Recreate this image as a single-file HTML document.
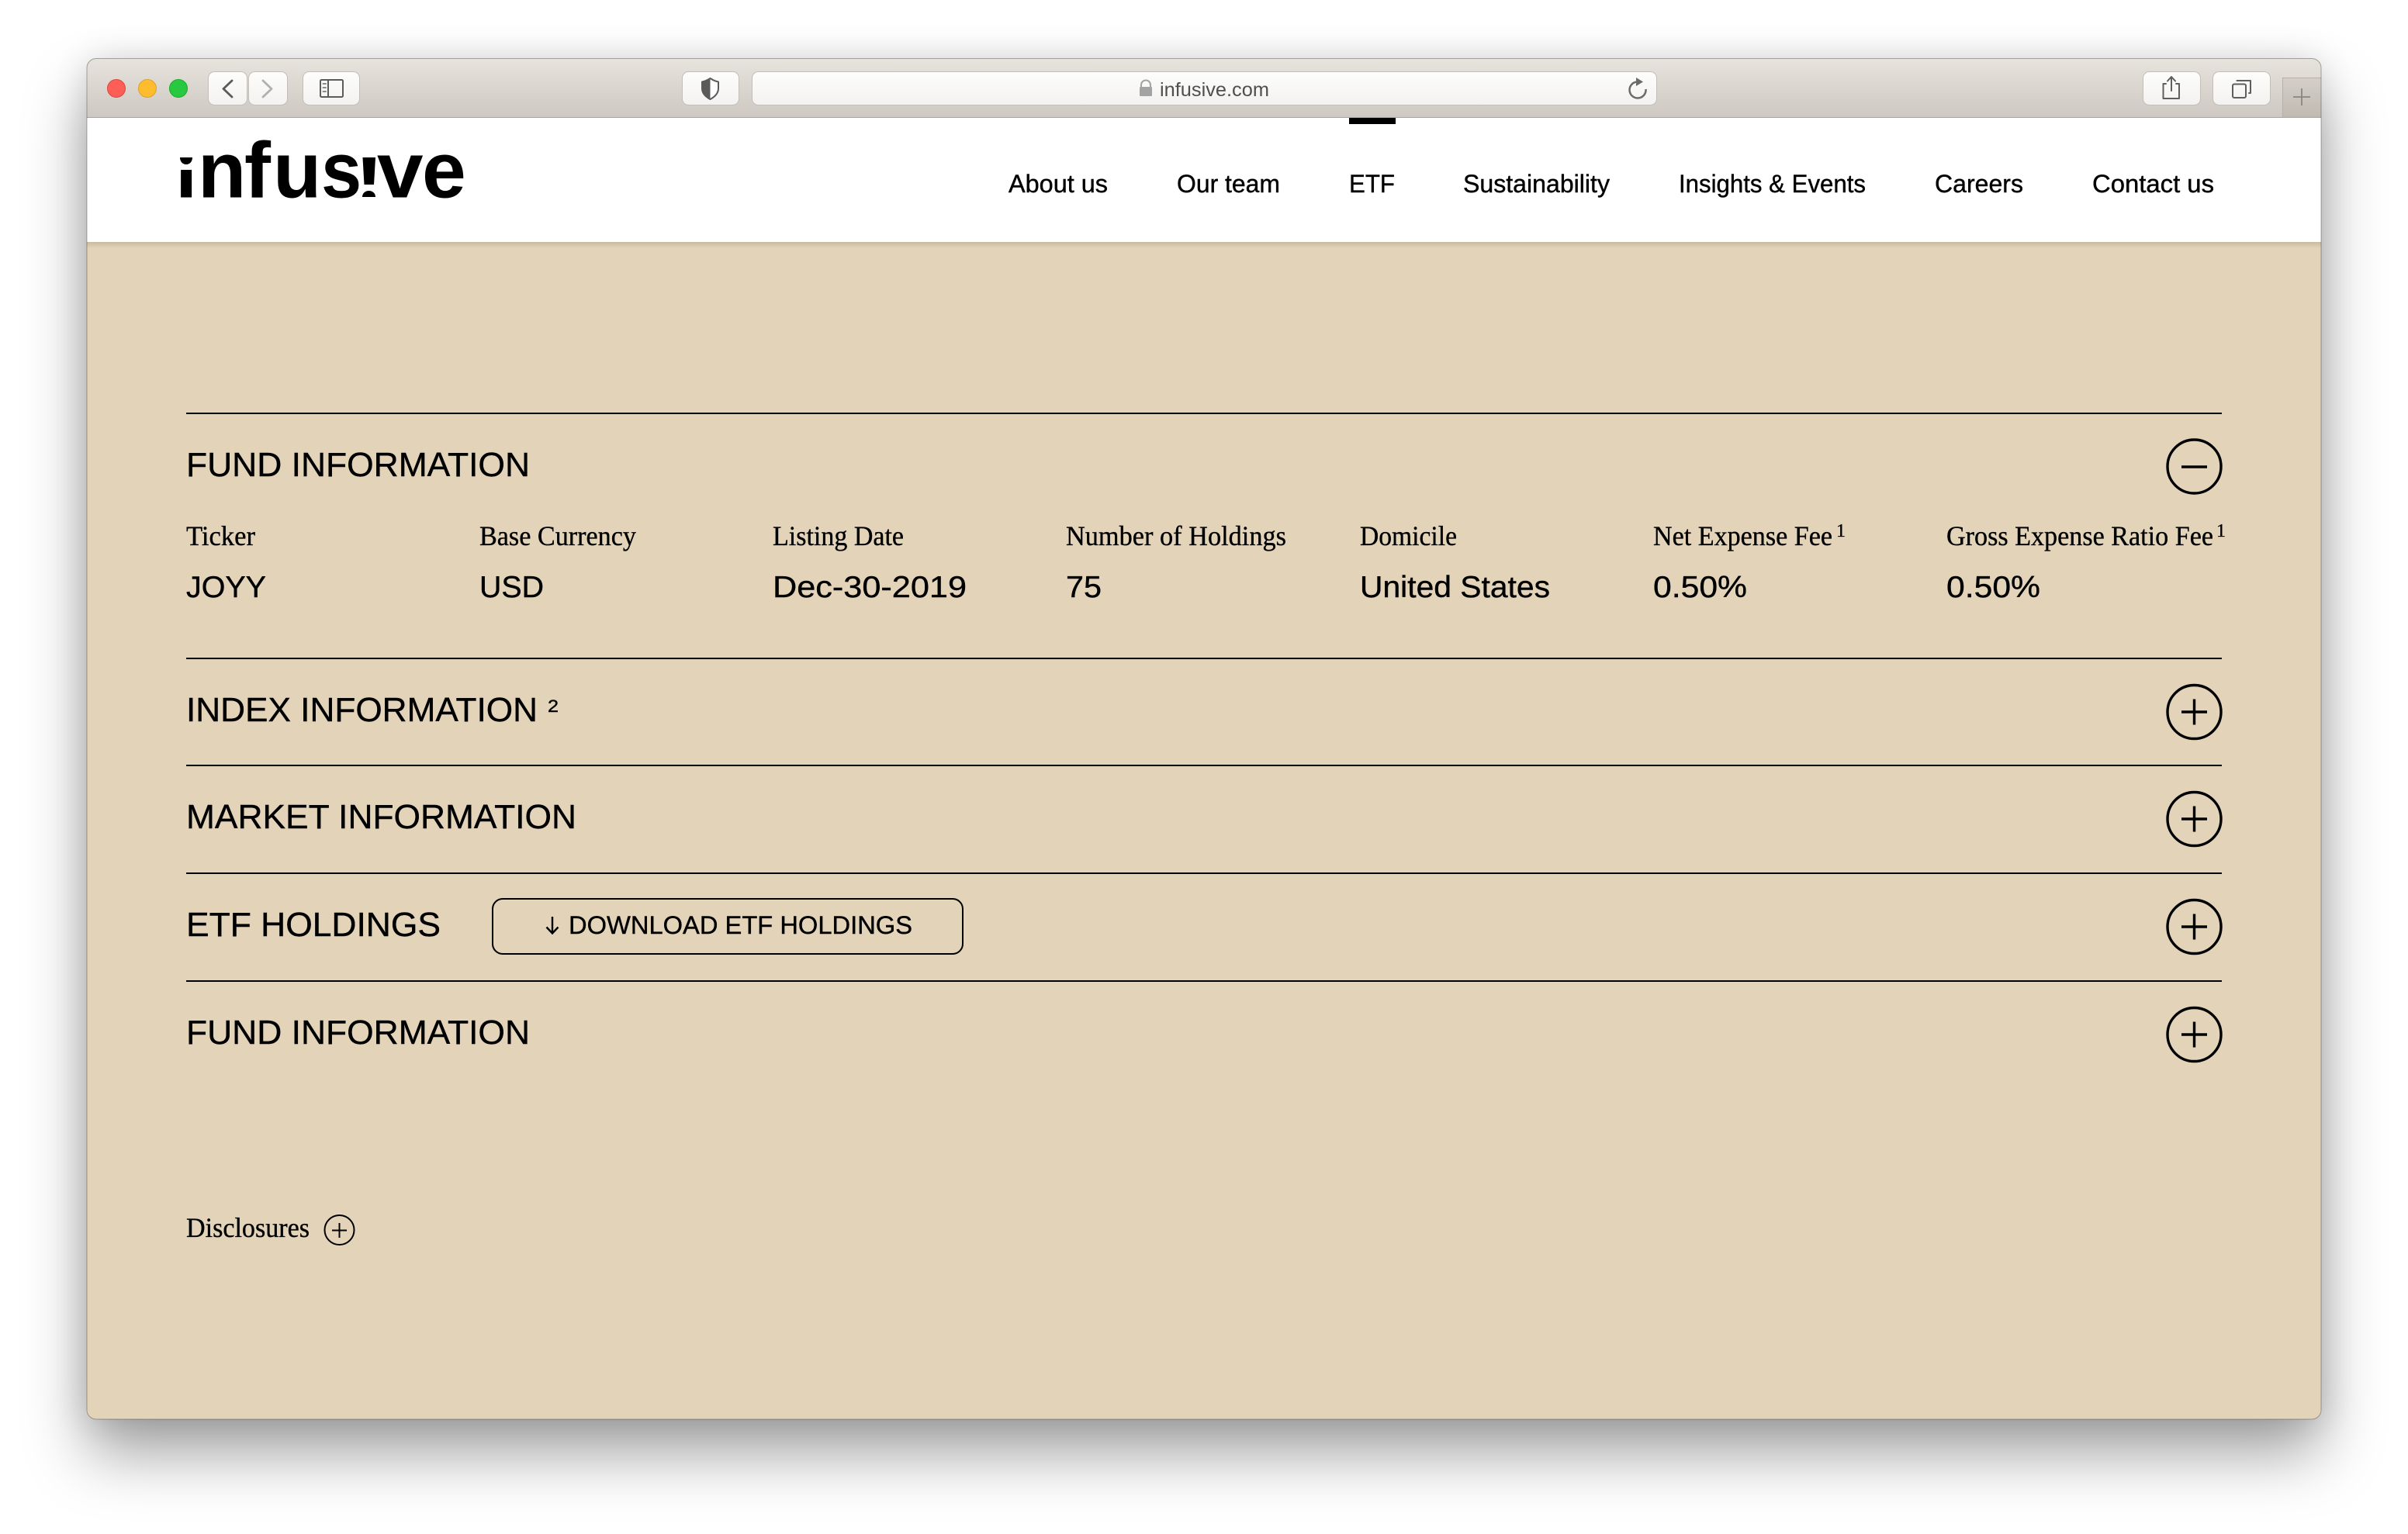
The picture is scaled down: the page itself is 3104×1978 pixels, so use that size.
<!DOCTYPE html>
<html><head><meta charset="utf-8"><title>infusive.com</title>
<style>
html,body{margin:0;padding:0;width:3104px;height:1978px;background:#fff;overflow:hidden}
#w{position:absolute;left:112px;top:75px;width:2880px;height:1755px;border-radius:12px;box-shadow:0 44px 80px rgba(0,0,0,.37),0 0 44px rgba(0,0,0,.12)}
svg{position:absolute;left:0;top:0;display:block}
.s{font-family:"Liberation Sans",sans-serif;fill:#000;stroke:#000;stroke-width:.4px}
.r{font-family:"Liberation Serif",serif;fill:#000;stroke:#000;stroke-width:.35px}
.b{font-family:"Liberation Sans",sans-serif;font-weight:700;font-size:102px;fill:#000}
.t{font-size:44px}.n{font-size:32px}.v{font-size:39px}.l{font-size:36px}
</style></head><body>
<div id="w"></div>
<svg width="3104" height="1978" viewBox="0 0 3104 1978" xmlns="http://www.w3.org/2000/svg">
<defs>
<linearGradient id="tb" x1="0" y1="0" x2="0" y2="1"><stop offset="0" stop-color="#e7e3dd"/><stop offset="1" stop-color="#cdc8c1"/></linearGradient>
<linearGradient id="nt" x1="0" y1="0" x2="0" y2="1"><stop offset="0" stop-color="#d4cfc8"/><stop offset="1" stop-color="#bfbab2"/></linearGradient>
<linearGradient id="bt" x1="0" y1="0" x2="0" y2="1"><stop offset="0" stop-color="#fdfdfc"/><stop offset="1" stop-color="#f3f2f0"/></linearGradient>
<linearGradient id="sh" x1="0" y1="0" x2="0" y2="1"><stop offset="0" stop-color="#000" stop-opacity=".12"/><stop offset="1" stop-color="#000" stop-opacity="0"/></linearGradient>
<clipPath id="win"><rect x="112" y="75" width="2880" height="1755" rx="12"/></clipPath>
<clipPath id="ci"><rect x="225" y="219" width="30" height="40"/></clipPath>
<clipPath id="ce"><rect x="462" y="203" width="28" height="34"/></clipPath>
</defs>
<g clip-path="url(#win)">
<rect x="112" y="75" width="2880" height="1755" fill="#e3d3b8"/>
<rect x="112" y="75" width="2880" height="77" fill="url(#tb)"/>
<rect x="112" y="151" width="2880" height="1" fill="#aaa59e"/>
<rect x="112" y="152" width="2880" height="160" fill="#fff"/>
<rect x="112" y="312" width="2880" height="8" fill="url(#sh)"/>
<rect x="2942.500" y="100.500" width="60" height="50.500" fill="url(#nt)" stroke="#b5b0a8"/>
</g>
<rect x="112" y="75.500" width="2880" height="1754.500" rx="12" fill="none" stroke="#000" stroke-opacity=".3" stroke-width="1"/>
<circle cx="150" cy="114" r="11.500" fill="#fd5f57" stroke="#e0443e"/>
<circle cx="190" cy="114" r="11.500" fill="#febc2e" stroke="#dea123"/>
<circle cx="230" cy="114" r="11.500" fill="#28c940" stroke="#1aab29"/>
<g fill="url(#bt)" stroke="#c3bfb8">
<rect x="268.500" y="92.500" width="50" height="43" rx="8"/>
<rect x="320.500" y="92.500" width="50" height="43" rx="8"/>
<rect x="390.500" y="92.500" width="73" height="43" rx="8"/>
<rect x="879.500" y="92.500" width="73" height="43" rx="8"/>
<rect x="969.500" y="92.500" width="1166" height="43" rx="8"/>
<rect x="2762.500" y="92.500" width="74" height="43" rx="8"/>
<rect x="2852.500" y="92.500" width="74" height="43" rx="8"/>
</g>
<g fill="none" stroke-linecap="round" stroke-linejoin="round">
<path d="M299 104 L288 114.500 L299 125" stroke="#5a5a5a" stroke-width="2.800"/>
<path d="M339 104 L350 114.500 L339 125" stroke="#b0b0b0" stroke-width="2.800"/>
<rect x="413" y="103" width="29" height="22" rx="1.500" stroke="#5c5c5c" stroke-width="2"/>
<path d="M423 103 V125" stroke="#5c5c5c" stroke-width="2"/>
<path d="M416.500 108 H420 M416.500 113 H420 M416.500 118 H420" stroke="#8a8a8a" stroke-width="2"/>
<path d="M915.500 101 C911 104 908 105 905 105.500 V114 C905 121 910 125 915.500 128 C921 125 926 121 926 114 V105.500 C923 105 920 104 915.500 101 Z" stroke="#5a5a5a" stroke-width="2" fill="#fff"/>
<path d="M915.500 101 C911 104 908 105 905 105.500 V114 C905 121 910 125 915.500 128 Z" fill="#5a5a5a"/>
<path d="M2110 105.500 A10.500 10.500 0 1 0 2121.500 115" stroke="#6b6b6b" stroke-width="2.500" stroke-linecap="butt"/>
<path d="M2792 108 H2788.500 V127 H2809 V108 H2805 M2799 117 V99.500 M2794 104.500 L2799 99 L2804 104.500" stroke="#5e5e5e" stroke-width="2"/>
<rect x="2878" y="108.500" width="17" height="17.500" rx="2" stroke="#5e5e5e" stroke-width="2"/>
<path d="M2883.500 104 H2901 V120 H2899" stroke="#5e5e5e" stroke-width="2"/>
<path d="M2956 125 H2978 M2967 114 V136" stroke="#8a867f" stroke-width="1.800" stroke-linecap="butt"/>
</g>
<path d="M2109 100 L2118 105.500 L2109 111 Z" fill="#6b6b6b"/>
<path d="M1471 113 V109.500 a6 6 0 0 1 12 0 V113" fill="none" stroke="#a3a3a3" stroke-width="2"/>
<rect x="1469" y="112" width="16" height="12" rx="1" fill="#a3a3a3"/>
<text x="1495" y="124" font-size="25" font-family="Liberation Sans, sans-serif" fill="#4f4f4f" textLength="141" lengthAdjust="spacingAndGlyphs">infusive.com</text>

<!-- logo -->
<text class="b" x="226" y="254.500" clip-path="url(#ci)">i</text>
<text class="b" x="255" y="254.500">n</text>
<text class="b" x="315" y="254.500">f</text>
<text class="b" x="352" y="254.500">u</text>
<text class="b" transform="translate(414 254.500) scale(.92 1)">s</text>
<text class="b" x="459" y="254.500" clip-path="url(#ce)">!</text>
<text class="b" transform="translate(486 254.500) scale(1.05 1)">v</text>
<text class="b" x="544" y="254.500">e</text>
<path d="M232 203 H248 C248 208 245 212 240 212 C235 212 232 208 232 203 Z" fill="#000"/>
<path d="M467.500 203 H484 L482 238 H469.500 Z" fill="#000"/>
<path d="M467 254 C467 249 471 246 475.500 246 C480 246 484 249 484 254 Z" fill="#000"/>

<!-- nav -->
<text class="s n" x="1300" y="248" textLength="128" lengthAdjust="spacingAndGlyphs">About us</text>
<text class="s n" x="1517" y="248" textLength="133" lengthAdjust="spacingAndGlyphs">Our team</text>
<text class="s n" x="1739" y="248" textLength="59" lengthAdjust="spacingAndGlyphs">ETF</text>
<text class="s n" x="1886" y="248" textLength="189" lengthAdjust="spacingAndGlyphs">Sustainability</text>
<text class="s n" x="2164" y="248" textLength="241" lengthAdjust="spacingAndGlyphs">Insights &amp; Events</text>
<text class="s n" x="2494" y="248" textLength="114" lengthAdjust="spacingAndGlyphs">Careers</text>
<text class="s n" x="2697" y="248" textLength="157" lengthAdjust="spacingAndGlyphs">Contact us</text>
<rect x="1739" y="152" width="60" height="8" fill="#000"/>

<!-- rules -->
<g fill="#000">
<rect x="240" y="532" width="2624" height="2"/>
<rect x="240" y="848" width="2624" height="2"/>
<rect x="240" y="986" width="2624" height="2"/>
<rect x="240" y="1125" width="2624" height="2"/>
<rect x="240" y="1264" width="2624" height="2"/>
</g>

<!-- titles -->
<text class="s t" x="240" y="614" textLength="443" lengthAdjust="spacingAndGlyphs">FUND INFORMATION</text>
<text class="s t" x="240" y="930" textLength="453" lengthAdjust="spacingAndGlyphs">INDEX INFORMATION</text>
<text class="s" x="706" y="918" font-size="22" textLength="14" lengthAdjust="spacingAndGlyphs">2</text>
<text class="s t" x="240" y="1068" textLength="503" lengthAdjust="spacingAndGlyphs">MARKET INFORMATION</text>
<text class="s t" x="240" y="1207" textLength="328" lengthAdjust="spacingAndGlyphs">ETF HOLDINGS</text>
<text class="s t" x="240" y="1346" textLength="443" lengthAdjust="spacingAndGlyphs">FUND INFORMATION</text>

<!-- labels -->
<text class="r l" x="240" y="703" textLength="89" lengthAdjust="spacingAndGlyphs">Ticker</text>
<text class="r l" x="618" y="703" textLength="202" lengthAdjust="spacingAndGlyphs">Base Currency</text>
<text class="r l" x="996" y="703" textLength="169" lengthAdjust="spacingAndGlyphs">Listing Date</text>
<text class="r l" x="1374" y="703" textLength="284" lengthAdjust="spacingAndGlyphs">Number of Holdings</text>
<text class="r l" x="1753" y="703" textLength="125" lengthAdjust="spacingAndGlyphs">Domicile</text>
<text class="r l" x="2131" y="703" textLength="231" lengthAdjust="spacingAndGlyphs">Net Expense Fee</text>
<text class="r" x="2367" y="692" font-size="24">1</text>
<text class="r l" x="2509" y="703" textLength="344" lengthAdjust="spacingAndGlyphs">Gross Expense Ratio Fee</text>
<text class="r" x="2857" y="692" font-size="24">1</text>

<!-- values -->
<text class="s v" x="240" y="770" textLength="103" lengthAdjust="spacingAndGlyphs">JOYY</text>
<text class="s v" x="618" y="770" textLength="83" lengthAdjust="spacingAndGlyphs">USD</text>
<text class="s v" x="996" y="770" textLength="250" lengthAdjust="spacingAndGlyphs">Dec-30-2019</text>
<text class="s v" x="1374" y="770" textLength="46" lengthAdjust="spacingAndGlyphs">75</text>
<text class="s v" x="1753" y="770" textLength="245" lengthAdjust="spacingAndGlyphs">United States</text>
<text class="s v" x="2131" y="770" textLength="121" lengthAdjust="spacingAndGlyphs">0.50%</text>
<text class="s v" x="2509" y="770" textLength="121" lengthAdjust="spacingAndGlyphs">0.50%</text>

<!-- toggles -->
<g fill="none" stroke="#000" stroke-width="3.400">
<circle cx="2828.500" cy="601.500" r="34.500"/>
<path d="M2812 602 H2845"/>
<circle cx="2828.500" cy="918" r="34.500"/>
<path d="M2812 918 H2845 M2828.500 901.500 V934.500"/>
<circle cx="2828.500" cy="1056" r="34.500"/>
<path d="M2812 1056 H2845 M2828.500 1039.500 V1072.500"/>
<circle cx="2828.500" cy="1195" r="34.500"/>
<path d="M2812 1195 H2845 M2828.500 1178.500 V1211.500"/>
<circle cx="2828.500" cy="1334" r="34.500"/>
<path d="M2812 1334 H2845 M2828.500 1317.500 V1350.500"/>
</g>

<!-- download button -->
<rect x="635" y="1159" width="606" height="71" rx="13" fill="none" stroke="#000" stroke-width="2"/>
<path d="M712 1182 V1203 M704.500 1195.500 L712 1203.500 L719.500 1195.500" fill="none" stroke="#000" stroke-width="2.400"/>
<text class="s n" x="733" y="1204" textLength="443" lengthAdjust="spacingAndGlyphs">DOWNLOAD ETF HOLDINGS</text>

<!-- disclosures -->
<text class="r l" x="240" y="1595" textLength="159" lengthAdjust="spacingAndGlyphs">Disclosures</text>
<circle cx="437.500" cy="1586" r="19" fill="none" stroke="#000" stroke-width="2"/>
<path d="M428 1586.500 H447 M437.500 1577 V1596" fill="none" stroke="#000" stroke-width="2"/>
</svg>
</body></html>
